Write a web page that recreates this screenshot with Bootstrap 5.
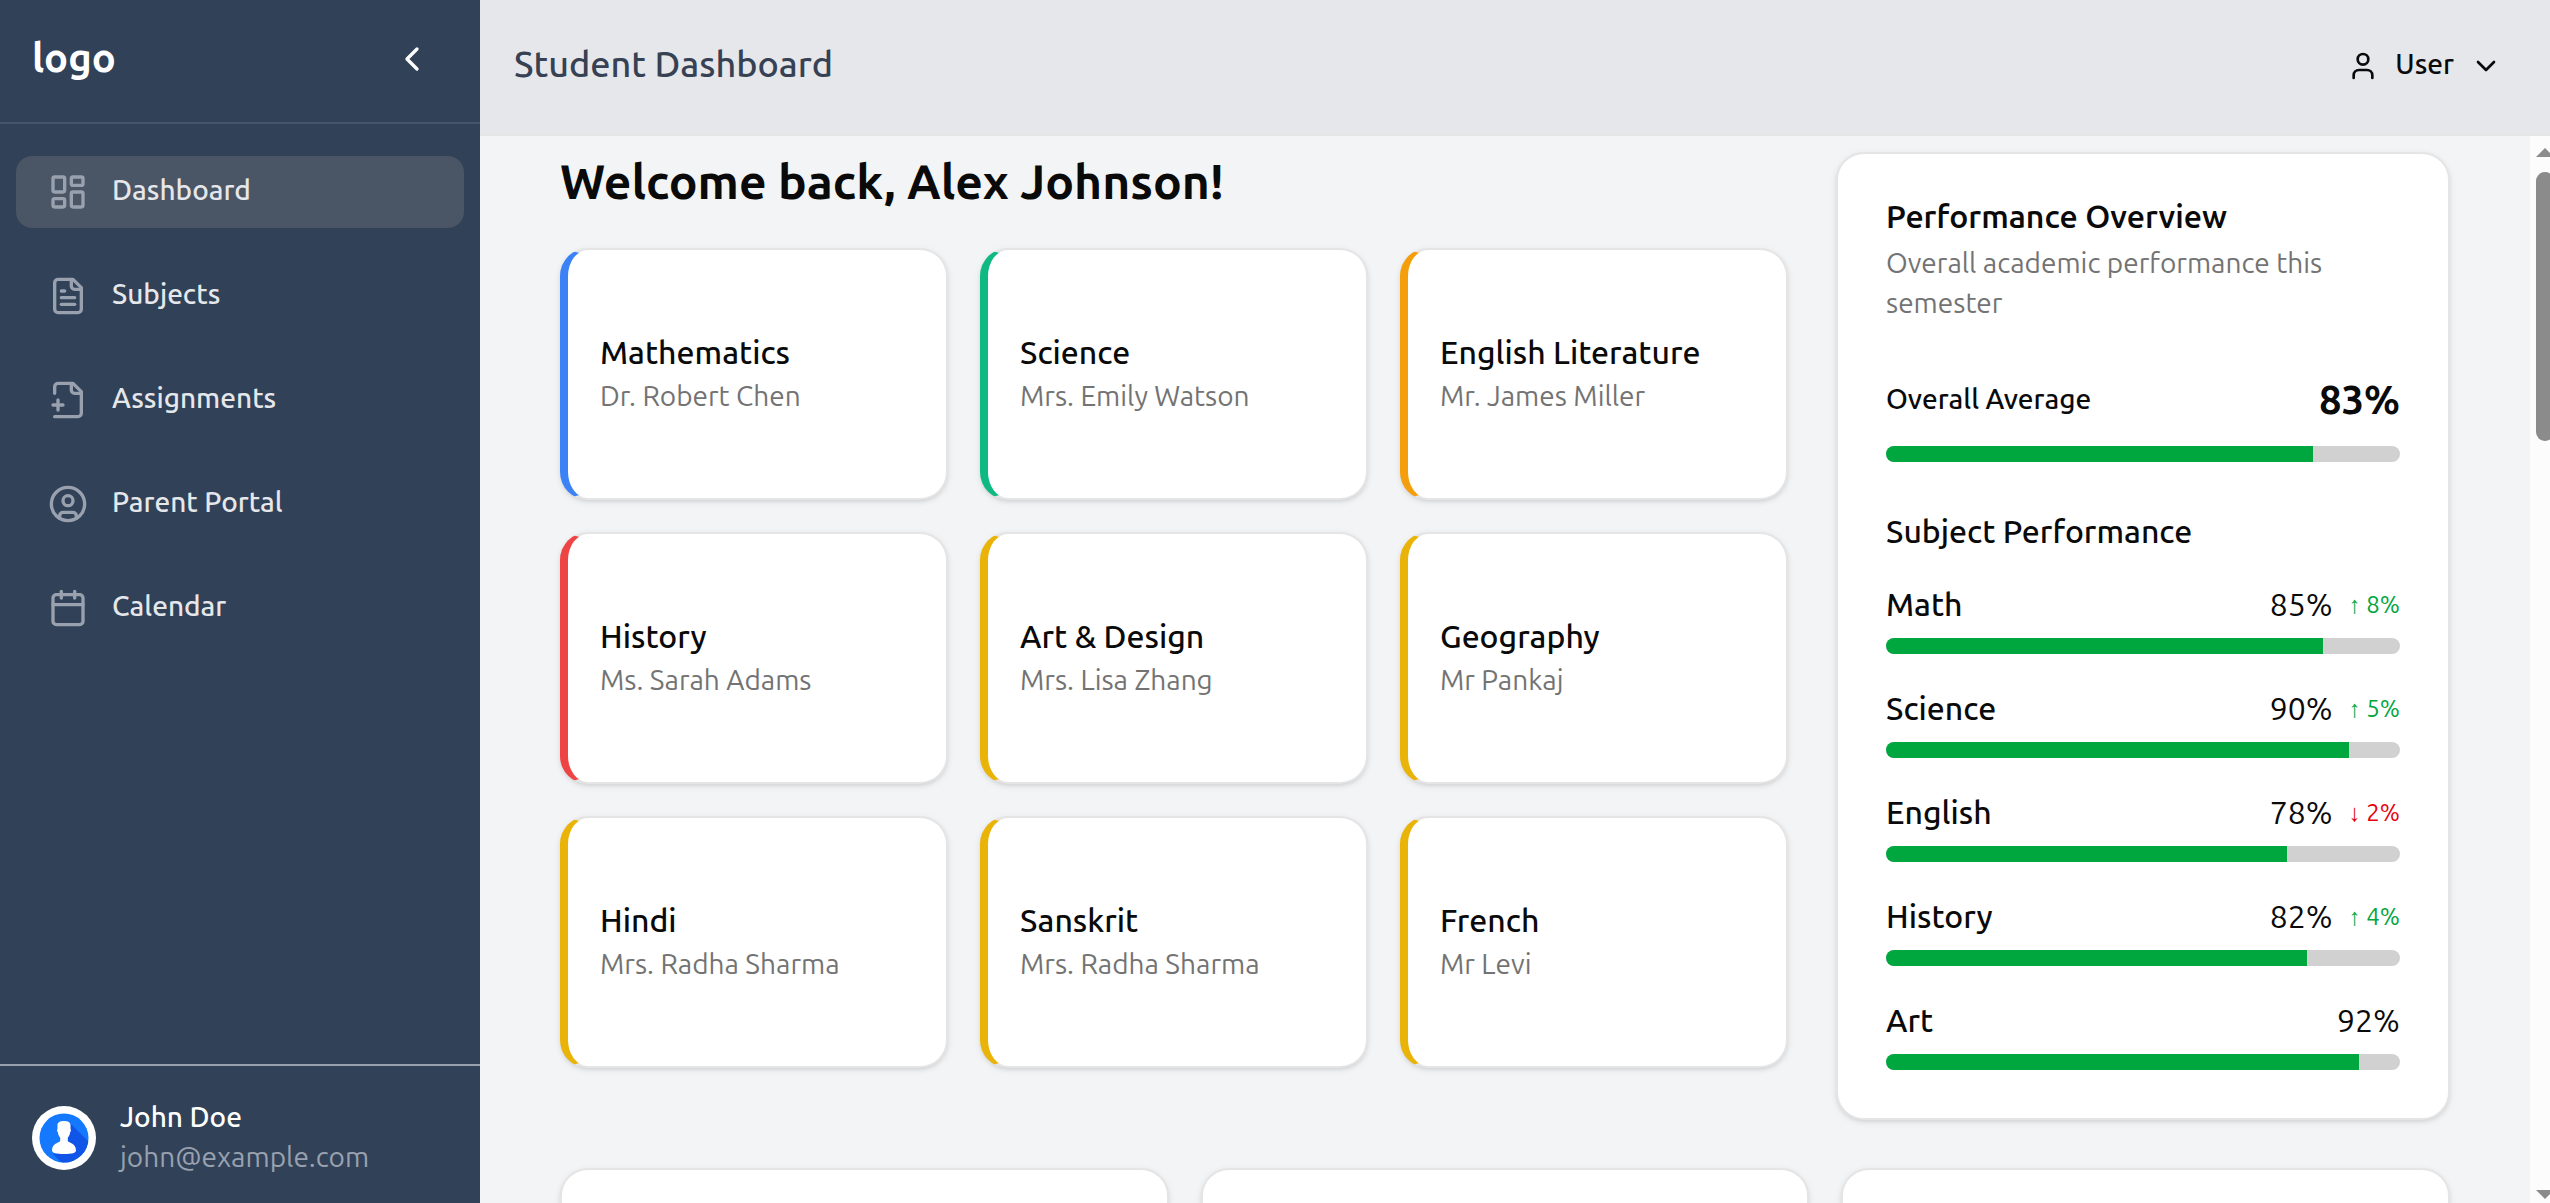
<!DOCTYPE html>
<html lang="en">
<head>
<meta charset="utf-8">
<meta name="viewport" content="width=device-width, initial-scale=1">
<title>Student Dashboard</title>
<link href="https://cdn.jsdelivr.net/npm/bootstrap@5.3.0/dist/css/bootstrap.min.css" rel="stylesheet">
<style>
  body {
    --bs-body-font-family: "Ubuntu Sans", Ubuntu, "Noto Sans", sans-serif;
    --bs-body-color: #0a0a0a;
    --bs-body-bg: #f3f4f6;
    font-size: 28px;
    line-height: 40px;
  }
  .icon { flex: none; fill: none; stroke: currentColor; stroke-width: 2; stroke-linecap: round; stroke-linejoin: round; }
  .icon-lg { width: 40px; height: 40px; }
  .icon-md { width: 32px; height: 32px; }
  .label { padding-bottom: 2px; }

  .sidebar { width: 480px; background: #314158; }
  .sidebar-head { height: 124px; padding: 0 48px 4px 32px; border-bottom: 2px solid #45556c; }
  .brand { font-size: 40px; line-height: 56px; }
  .side-nav { padding: 32px 16px; gap: 32px; }
  .side-nav .nav-link { height: 72px; padding: 0 32px; border-radius: 16px; gap: 24px; color: #e5e7eb; font-weight: 500; }
  .side-nav .nav-link.active { background: #4a5565; }
  .side-nav .icon { color: #99a1af; }
  .account { padding: 32px 32px 25px; gap: 24px; border-top: 2px solid #99a1af; }
  .account-name { font-weight: 500; }
  .account-mail { color: #99a1af; }
  .avatar { flex: none; width: 64px; height: 64px; }

  .topbar { height: 136px; padding: 0 48px 2px 34px; background: #e5e7eb; border-bottom: 2px solid #e5e5e5; }
  .topbar h1 { font-size: 36px; line-height: 56px; color: #364153; }
  .user-btn { gap: 16px; font-size: 28px; line-height: 40px; font-weight: 500; color: #0a0a0a; }

  .content { padding: 16px 80px 0; gap: 48px; }
  .overview { display: grid; grid-template-columns: 2fr 1fr; gap: 48px; }
  .welcome { font-size: 48px; line-height: 62px; margin-bottom: 34px; }
  .tile-grid { display: grid; grid-template-columns: repeat(3, 1fr); gap: 32px; }
  .panel { --bs-card-border-color: #e5e5e5; --bs-card-border-width: 2px; --bs-card-border-radius: 28px; --bs-card-inner-border-radius: 26px; --bs-card-spacer-x: 48px; --bs-card-spacer-y: 48px; --bs-card-bg: #fff; box-shadow: 0 2px 6px rgba(0,0,0,.1), 0 2px 4px -2px rgba(0,0,0,.1); }
  .subject { height: 252px; padding: 0 32px 2px; border-left: 8px solid var(--accent); justify-content: center; }
  .subject h3 { font-size: 32px; line-height: 48px; margin: 0; }
  .accent-blue { --accent: #3b82f6; }
  .accent-green { --accent: #10b981; }
  .accent-orange { --accent: #f59e0b; }
  .accent-red { --accent: #ef4444; }
  .accent-yellow { --accent: #eab308; }
  .muted { color: #737373; }
  .stub { height: 252px; }

  .perf-title { font-size: 32px; line-height: 30px; margin-bottom: 12px; }
  .perf-sub { margin-bottom: 48px; }
  .overall { font-size: 28px; line-height: 40px; }
  .total { font-size: 40px; line-height: 56px; }
  .meter { --bs-progress-height: 16px; --bs-progress-bg: #d1d1d1; --bs-progress-bar-bg: #00a63e; --bs-progress-border-radius: 8px; }
  .total-meter { margin: 18px 0 46px; }
  .section-title { font-size: 32px; line-height: 48px; margin-bottom: 24px; }
  .scores { gap: 30px; font-size: 32px; line-height: 50px; }
  .scores .meter { margin-top: 8px; }
  .score-name { font-weight: 500; }
  .trend { font-size: 24px; margin-left: 16px; }
  .up { color: #00a63e; }
  .down { color: #e7000b; }

  .scrollbar { flex: none; width: 20px; background: #fcfcfc; padding: 12px 0 4px 6px; }
  .scrollbar svg { flex: none; fill: #8b8b8b; }
  .thumb { flex: none; width: 18px; height: 269px; margin: 15px 0 auto; border-radius: 9px; background: #8b8b8b; }
</style>
<script src="https://cdn.jsdelivr.net/npm/bootstrap@5.3.0/dist/js/bootstrap.bundle.min.js"></script>
</head>
<body>
<div class="d-flex vh-100 overflow-hidden">
  <aside class="sidebar d-flex flex-column flex-shrink-0 text-white">
    <div class="sidebar-head d-flex align-items-center justify-content-between">
      <span class="brand label fw-bold">logo</span>
      <button type="button" class="btn p-0 border-0 text-white d-flex" aria-label="Collapse sidebar">
        <svg class="icon icon-lg" viewBox="0 0 24 24"><path d="m15 18-6-6 6-6"/></svg>
      </button>
    </div>
    <nav class="side-nav nav flex-column flex-nowrap flex-grow-1">
      <a class="nav-link active d-flex align-items-center" href="#">
        <svg class="icon icon-lg" viewBox="0 0 24 24"><rect width="7" height="9" x="3" y="3" rx="1"/><rect width="7" height="5" x="14" y="3" rx="1"/><rect width="7" height="9" x="14" y="12" rx="1"/><rect width="7" height="5" x="3" y="16" rx="1"/></svg>
        <span class="label">Dashboard</span></a>
      <a class="nav-link d-flex align-items-center" href="#">
        <svg class="icon icon-lg" viewBox="0 0 24 24"><path d="M15 2H6a2 2 0 0 0-2 2v16a2 2 0 0 0 2 2h12a2 2 0 0 0 2-2V7Z"/><path d="M14 2v4a2 2 0 0 0 2 2h4"/><path d="M10 9H8"/><path d="M16 13H8"/><path d="M16 17H8"/></svg>
        <span class="label">Subjects</span></a>
      <a class="nav-link d-flex align-items-center" href="#">
        <svg class="icon icon-lg" viewBox="0 0 24 24"><path d="M4 22h14a2 2 0 0 0 2-2V7l-5-5H6a2 2 0 0 0-2 2v4"/><path d="M14 2v4a2 2 0 0 0 2 2h4"/><path d="M3 15h6"/><path d="M6 12v6"/></svg>
        <span class="label">Assignments</span></a>
      <a class="nav-link d-flex align-items-center" href="#">
        <svg class="icon icon-lg" viewBox="0 0 24 24"><circle cx="12" cy="12" r="10"/><circle cx="12" cy="10" r="3"/><path d="M7 20.662V19a2 2 0 0 1 2-2h6a2 2 0 0 1 2 2v1.662"/></svg>
        <span class="label">Parent Portal</span></a>
      <a class="nav-link d-flex align-items-center" href="#">
        <svg class="icon icon-lg" viewBox="0 0 24 24"><path d="M8 2v4"/><path d="M16 2v4"/><rect width="18" height="18" x="3" y="4" rx="2"/><path d="M3 10h18"/></svg>
        <span class="label">Calendar</span></a>
    </nav>
    <div class="account d-flex align-items-center">
      <svg class="avatar" viewBox="0 0 64 64" role="img" aria-label="Avatar">
        <defs><clipPath id="disc"><circle cx="32" cy="32" r="24.500"/></clipPath></defs>
        <circle cx="32" cy="32" r="32" fill="#fff"/>
        <circle cx="32" cy="32" r="24.500" fill="#1479ff"/>
        <path clip-path="url(#disc)" fill="#1155e8" d="M38 17 64 43V64H37L21 48 34 40Z"/>
        <path fill="#fff" d="M25.500 19c0-2.500 2.500-4 6.500-4s6.500 1.500 6.500 4v4c.8 1 .5 2.500-.3 3-.4 3-1.400 4.600-2.400 5.500v3.500c1.200 2 8.200 2 8.200 9.500 0 2.500-4 3.500-12 3.500s-12-1-12-3.500c0-7.500 7-7.500 8.200-9.500v-3.500c-1-.9-2-2.500-2.400-5.500-.8-.5-1.100-2-.3-3Z"/>
      </svg>
      <div>
        <div class="account-name">John Doe</div>
        <div class="account-mail">john@example.com</div>
      </div>
    </div>
  </aside>

  <div class="d-flex flex-column flex-grow-1">
    <header class="topbar d-flex align-items-center justify-content-between flex-shrink-0">
      <h1 class="label mb-0">Student Dashboard</h1>
      <button type="button" class="user-btn btn p-0 border-0 d-flex align-items-center">
        <svg class="icon icon-md" viewBox="0 0 24 24"><path d="M19 21v-2a4 4 0 0 0-4-4H9a4 4 0 0 0-4 4v2"/><circle cx="12" cy="7" r="4"/></svg>
        <span class="label">User</span>
        <svg class="icon icon-md" viewBox="0 0 24 24"><path d="m6 9 6 6 6-6"/></svg>
      </button>
    </header>
    <div class="d-flex flex-grow-1 overflow-hidden">
      <main class="content d-flex flex-column flex-grow-1">
        <div class="overview">
          <section>
            <h2 class="welcome fw-bold">Welcome back, Alex Johnson!</h2>
            <div class="tile-grid">
              <div class="card panel subject accent-blue"><h3>Mathematics</h3><div class="muted">Dr. Robert Chen</div></div>
              <div class="card panel subject accent-green"><h3>Science</h3><div class="muted">Mrs. Emily Watson</div></div>
              <div class="card panel subject accent-orange"><h3>English Literature</h3><div class="muted">Mr. James Miller</div></div>
              <div class="card panel subject accent-red"><h3>History</h3><div class="muted">Ms. Sarah Adams</div></div>
              <div class="card panel subject accent-yellow"><h3>Art &amp; Design</h3><div class="muted">Mrs. Lisa Zhang</div></div>
              <div class="card panel subject accent-yellow"><h3>Geography</h3><div class="muted">Mr Pankaj</div></div>
              <div class="card panel subject accent-yellow"><h3>Hindi</h3><div class="muted">Mrs. Radha Sharma</div></div>
              <div class="card panel subject accent-yellow"><h3>Sanskrit</h3><div class="muted">Mrs. Radha Sharma</div></div>
              <div class="card panel subject accent-yellow"><h3>French</h3><div class="muted">Mr Levi</div></div>
            </div>
          </section>
          <section class="card panel">
            <div class="card-body">
              <h2 class="perf-title fw-semibold">Performance Overview</h2>
              <p class="perf-sub muted">Overall academic performance this semester</p>
              <div class="d-flex align-items-center justify-content-between">
                <h3 class="overall m-0">Overall Average</h3>
                <span class="total fw-bold">83%</span>
              </div>
              <div class="progress meter total-meter"><div class="progress-bar" style="width:83%"></div></div>
              <h3 class="section-title">Subject Performance</h3>
              <div class="scores d-flex flex-column">
                <div><div class="d-flex"><span class="score-name me-auto">Math</span><span>85%</span><span class="trend up">↑ 8%</span></div>
                  <div class="progress meter"><div class="progress-bar" style="width:85%"></div></div></div>
                <div><div class="d-flex"><span class="score-name me-auto">Science</span><span>90%</span><span class="trend up">↑ 5%</span></div>
                  <div class="progress meter"><div class="progress-bar" style="width:90%"></div></div></div>
                <div><div class="d-flex"><span class="score-name me-auto">English</span><span>78%</span><span class="trend down">↓ 2%</span></div>
                  <div class="progress meter"><div class="progress-bar" style="width:78%"></div></div></div>
                <div><div class="d-flex"><span class="score-name me-auto">History</span><span>82%</span><span class="trend up">↑ 4%</span></div>
                  <div class="progress meter"><div class="progress-bar" style="width:82%"></div></div></div>
                <div><div class="d-flex"><span class="score-name me-auto">Art</span><span>92%</span></div>
                  <div class="progress meter"><div class="progress-bar" style="width:92%"></div></div></div>
              </div>
            </div>
          </section>
        </div>
        <div class="tile-grid">
          <div class="card panel stub"></div>
          <div class="card panel stub"></div>
          <div class="card panel stub"></div>
        </div>
      </main>
      <div class="scrollbar d-flex flex-column overflow-hidden" aria-hidden="true">
        <svg width="18" height="9" viewBox="0 0 18 9"><path d="M0 9 9 0l9 9Z"/></svg>
        <div class="thumb"></div>
        <svg width="18" height="9" viewBox="0 0 18 9"><path d="M0 0h18L9 9Z"/></svg>
      </div>
    </div>
  </div>
</div>
</body>
</html>
